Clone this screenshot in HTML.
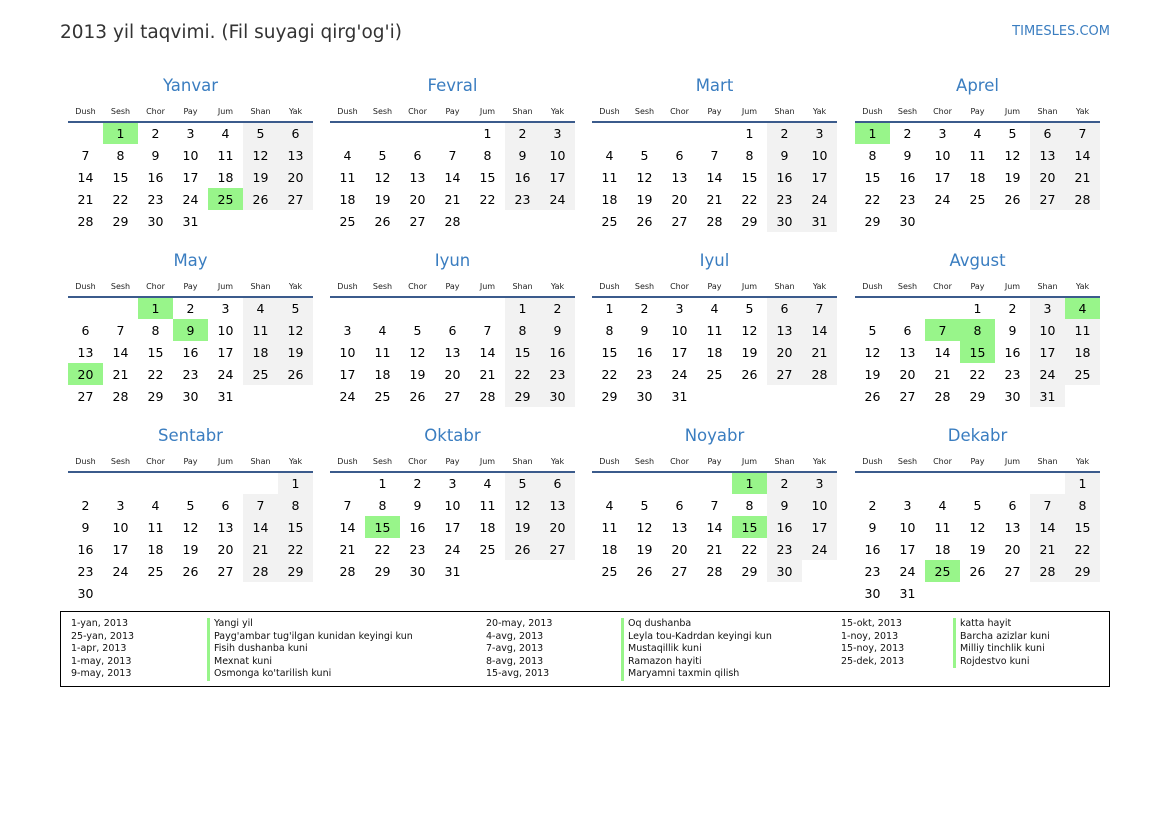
<!DOCTYPE html>
<html><head><meta charset="utf-8"><style>
*{margin:0;padding:0;box-sizing:border-box}
body{width:1169px;height:827px;background:#fff;font-family:"DejaVu Sans","Liberation Sans",sans-serif;color:#000;position:relative;overflow:hidden}
.h1{position:absolute;left:60px;top:21px;font-size:18.5px;color:#333;line-height:24px}
.site{position:absolute;right:59px;top:24px;font-size:13px;color:#3a7dc0;line-height:16px}
.m{position:absolute;width:245px}
.m .t{height:20px;line-height:20px;text-align:center;font-size:16.5px;color:#3a7dc0}
table{border-collapse:collapse;margin-top:6px;width:245px;table-layout:fixed}
th{height:20px;font-size:8px;font-weight:normal;color:#222;border-bottom:2px solid #3b5b8c;vertical-align:middle}
td{width:35px;height:22px;text-align:center;font-size:12.5px;padding:0}
td.w{background:#f2f2f2}
td.g{background:#98f58a}
.leg{position:absolute;left:60px;top:611px;width:1050px;height:76px;border:1px solid #000}
.c{position:absolute;top:6px;font-size:9.5px;line-height:12.5px;color:#111}
.b{border-left:3px solid #98f58a;padding-left:4px}
</style></head><body>
<div class="h1">2013 yil taqvimi. (Fil suyagi qirg'og'i)</div>
<div class="site">TIMESLES.COM</div>

<div class="m" style="left:68px;top:76px"><div class="t">Yanvar</div><table><tr><th>Dush</th><th>Sesh</th><th>Chor</th><th>Pay</th><th>Jum</th><th>Shan</th><th>Yak</th></tr>
<tr><td></td><td class="g">1</td><td>2</td><td>3</td><td>4</td><td class="w">5</td><td class="w">6</td></tr>
<tr><td>7</td><td>8</td><td>9</td><td>10</td><td>11</td><td class="w">12</td><td class="w">13</td></tr>
<tr><td>14</td><td>15</td><td>16</td><td>17</td><td>18</td><td class="w">19</td><td class="w">20</td></tr>
<tr><td>21</td><td>22</td><td>23</td><td>24</td><td class="g">25</td><td class="w">26</td><td class="w">27</td></tr>
<tr><td>28</td><td>29</td><td>30</td><td>31</td><td></td><td></td><td></td></tr></table></div>

<div class="m" style="left:330px;top:76px"><div class="t">Fevral</div><table><tr><th>Dush</th><th>Sesh</th><th>Chor</th><th>Pay</th><th>Jum</th><th>Shan</th><th>Yak</th></tr>
<tr><td></td><td></td><td></td><td></td><td>1</td><td class="w">2</td><td class="w">3</td></tr>
<tr><td>4</td><td>5</td><td>6</td><td>7</td><td>8</td><td class="w">9</td><td class="w">10</td></tr>
<tr><td>11</td><td>12</td><td>13</td><td>14</td><td>15</td><td class="w">16</td><td class="w">17</td></tr>
<tr><td>18</td><td>19</td><td>20</td><td>21</td><td>22</td><td class="w">23</td><td class="w">24</td></tr>
<tr><td>25</td><td>26</td><td>27</td><td>28</td><td></td><td></td><td></td></tr></table></div>

<div class="m" style="left:592px;top:76px"><div class="t">Mart</div><table><tr><th>Dush</th><th>Sesh</th><th>Chor</th><th>Pay</th><th>Jum</th><th>Shan</th><th>Yak</th></tr>
<tr><td></td><td></td><td></td><td></td><td>1</td><td class="w">2</td><td class="w">3</td></tr>
<tr><td>4</td><td>5</td><td>6</td><td>7</td><td>8</td><td class="w">9</td><td class="w">10</td></tr>
<tr><td>11</td><td>12</td><td>13</td><td>14</td><td>15</td><td class="w">16</td><td class="w">17</td></tr>
<tr><td>18</td><td>19</td><td>20</td><td>21</td><td>22</td><td class="w">23</td><td class="w">24</td></tr>
<tr><td>25</td><td>26</td><td>27</td><td>28</td><td>29</td><td class="w">30</td><td class="w">31</td></tr></table></div>

<div class="m" style="left:855px;top:76px"><div class="t">Aprel</div><table><tr><th>Dush</th><th>Sesh</th><th>Chor</th><th>Pay</th><th>Jum</th><th>Shan</th><th>Yak</th></tr>
<tr><td class="g">1</td><td>2</td><td>3</td><td>4</td><td>5</td><td class="w">6</td><td class="w">7</td></tr>
<tr><td>8</td><td>9</td><td>10</td><td>11</td><td>12</td><td class="w">13</td><td class="w">14</td></tr>
<tr><td>15</td><td>16</td><td>17</td><td>18</td><td>19</td><td class="w">20</td><td class="w">21</td></tr>
<tr><td>22</td><td>23</td><td>24</td><td>25</td><td>26</td><td class="w">27</td><td class="w">28</td></tr>
<tr><td>29</td><td>30</td><td></td><td></td><td></td><td></td><td></td></tr></table></div>

<div class="m" style="left:68px;top:251px"><div class="t">May</div><table><tr><th>Dush</th><th>Sesh</th><th>Chor</th><th>Pay</th><th>Jum</th><th>Shan</th><th>Yak</th></tr>
<tr><td></td><td></td><td class="g">1</td><td>2</td><td>3</td><td class="w">4</td><td class="w">5</td></tr>
<tr><td>6</td><td>7</td><td>8</td><td class="g">9</td><td>10</td><td class="w">11</td><td class="w">12</td></tr>
<tr><td>13</td><td>14</td><td>15</td><td>16</td><td>17</td><td class="w">18</td><td class="w">19</td></tr>
<tr><td class="g">20</td><td>21</td><td>22</td><td>23</td><td>24</td><td class="w">25</td><td class="w">26</td></tr>
<tr><td>27</td><td>28</td><td>29</td><td>30</td><td>31</td><td></td><td></td></tr></table></div>

<div class="m" style="left:330px;top:251px"><div class="t">Iyun</div><table><tr><th>Dush</th><th>Sesh</th><th>Chor</th><th>Pay</th><th>Jum</th><th>Shan</th><th>Yak</th></tr>
<tr><td></td><td></td><td></td><td></td><td></td><td class="w">1</td><td class="w">2</td></tr>
<tr><td>3</td><td>4</td><td>5</td><td>6</td><td>7</td><td class="w">8</td><td class="w">9</td></tr>
<tr><td>10</td><td>11</td><td>12</td><td>13</td><td>14</td><td class="w">15</td><td class="w">16</td></tr>
<tr><td>17</td><td>18</td><td>19</td><td>20</td><td>21</td><td class="w">22</td><td class="w">23</td></tr>
<tr><td>24</td><td>25</td><td>26</td><td>27</td><td>28</td><td class="w">29</td><td class="w">30</td></tr></table></div>

<div class="m" style="left:592px;top:251px"><div class="t">Iyul</div><table><tr><th>Dush</th><th>Sesh</th><th>Chor</th><th>Pay</th><th>Jum</th><th>Shan</th><th>Yak</th></tr>
<tr><td>1</td><td>2</td><td>3</td><td>4</td><td>5</td><td class="w">6</td><td class="w">7</td></tr>
<tr><td>8</td><td>9</td><td>10</td><td>11</td><td>12</td><td class="w">13</td><td class="w">14</td></tr>
<tr><td>15</td><td>16</td><td>17</td><td>18</td><td>19</td><td class="w">20</td><td class="w">21</td></tr>
<tr><td>22</td><td>23</td><td>24</td><td>25</td><td>26</td><td class="w">27</td><td class="w">28</td></tr>
<tr><td>29</td><td>30</td><td>31</td><td></td><td></td><td></td><td></td></tr></table></div>

<div class="m" style="left:855px;top:251px"><div class="t">Avgust</div><table><tr><th>Dush</th><th>Sesh</th><th>Chor</th><th>Pay</th><th>Jum</th><th>Shan</th><th>Yak</th></tr>
<tr><td></td><td></td><td></td><td>1</td><td>2</td><td class="w">3</td><td class="g">4</td></tr>
<tr><td>5</td><td>6</td><td class="g">7</td><td class="g">8</td><td>9</td><td class="w">10</td><td class="w">11</td></tr>
<tr><td>12</td><td>13</td><td>14</td><td class="g">15</td><td>16</td><td class="w">17</td><td class="w">18</td></tr>
<tr><td>19</td><td>20</td><td>21</td><td>22</td><td>23</td><td class="w">24</td><td class="w">25</td></tr>
<tr><td>26</td><td>27</td><td>28</td><td>29</td><td>30</td><td class="w">31</td><td></td></tr></table></div>

<div class="m" style="left:68px;top:426px"><div class="t">Sentabr</div><table><tr><th>Dush</th><th>Sesh</th><th>Chor</th><th>Pay</th><th>Jum</th><th>Shan</th><th>Yak</th></tr>
<tr><td></td><td></td><td></td><td></td><td></td><td></td><td class="w">1</td></tr>
<tr><td>2</td><td>3</td><td>4</td><td>5</td><td>6</td><td class="w">7</td><td class="w">8</td></tr>
<tr><td>9</td><td>10</td><td>11</td><td>12</td><td>13</td><td class="w">14</td><td class="w">15</td></tr>
<tr><td>16</td><td>17</td><td>18</td><td>19</td><td>20</td><td class="w">21</td><td class="w">22</td></tr>
<tr><td>23</td><td>24</td><td>25</td><td>26</td><td>27</td><td class="w">28</td><td class="w">29</td></tr>
<tr><td>30</td><td></td><td></td><td></td><td></td><td></td><td></td></tr></table></div>

<div class="m" style="left:330px;top:426px"><div class="t">Oktabr</div><table><tr><th>Dush</th><th>Sesh</th><th>Chor</th><th>Pay</th><th>Jum</th><th>Shan</th><th>Yak</th></tr>
<tr><td></td><td>1</td><td>2</td><td>3</td><td>4</td><td class="w">5</td><td class="w">6</td></tr>
<tr><td>7</td><td>8</td><td>9</td><td>10</td><td>11</td><td class="w">12</td><td class="w">13</td></tr>
<tr><td>14</td><td class="g">15</td><td>16</td><td>17</td><td>18</td><td class="w">19</td><td class="w">20</td></tr>
<tr><td>21</td><td>22</td><td>23</td><td>24</td><td>25</td><td class="w">26</td><td class="w">27</td></tr>
<tr><td>28</td><td>29</td><td>30</td><td>31</td><td></td><td></td><td></td></tr></table></div>

<div class="m" style="left:592px;top:426px"><div class="t">Noyabr</div><table><tr><th>Dush</th><th>Sesh</th><th>Chor</th><th>Pay</th><th>Jum</th><th>Shan</th><th>Yak</th></tr>
<tr><td></td><td></td><td></td><td></td><td class="g">1</td><td class="w">2</td><td class="w">3</td></tr>
<tr><td>4</td><td>5</td><td>6</td><td>7</td><td>8</td><td class="w">9</td><td class="w">10</td></tr>
<tr><td>11</td><td>12</td><td>13</td><td>14</td><td class="g">15</td><td class="w">16</td><td class="w">17</td></tr>
<tr><td>18</td><td>19</td><td>20</td><td>21</td><td>22</td><td class="w">23</td><td class="w">24</td></tr>
<tr><td>25</td><td>26</td><td>27</td><td>28</td><td>29</td><td class="w">30</td><td></td></tr></table></div>

<div class="m" style="left:855px;top:426px"><div class="t">Dekabr</div><table><tr><th>Dush</th><th>Sesh</th><th>Chor</th><th>Pay</th><th>Jum</th><th>Shan</th><th>Yak</th></tr>
<tr><td></td><td></td><td></td><td></td><td></td><td></td><td class="w">1</td></tr>
<tr><td>2</td><td>3</td><td>4</td><td>5</td><td>6</td><td class="w">7</td><td class="w">8</td></tr>
<tr><td>9</td><td>10</td><td>11</td><td>12</td><td>13</td><td class="w">14</td><td class="w">15</td></tr>
<tr><td>16</td><td>17</td><td>18</td><td>19</td><td>20</td><td class="w">21</td><td class="w">22</td></tr>
<tr><td>23</td><td>24</td><td class="g">25</td><td>26</td><td>27</td><td class="w">28</td><td class="w">29</td></tr>
<tr><td>30</td><td>31</td><td></td><td></td><td></td><td></td><td></td></tr></table></div>

<div class="leg">
<div class="c" style="left:10px">1-yan, 2013<br>25-yan, 2013<br>1-apr, 2013<br>1-may, 2013<br>9-may, 2013</div>
<div class="c b" style="left:146px">Yangi yil<br>Payg'ambar tug'ilgan kunidan keyingi kun<br>Fisih dushanba kuni<br>Mexnat kuni<br>Osmonga ko'tarilish kuni</div>
<div class="c" style="left:425px">20-may, 2013<br>4-avg, 2013<br>7-avg, 2013<br>8-avg, 2013<br>15-avg, 2013</div>
<div class="c b" style="left:560px">Oq dushanba<br>Leyla tou-Kadrdan keyingi kun<br>Mustaqillik kuni<br>Ramazon hayiti<br>Maryamni taxmin qilish</div>
<div class="c" style="left:780px">15-okt, 2013<br>1-noy, 2013<br>15-noy, 2013<br>25-dek, 2013</div>
<div class="c b" style="left:892px">katta hayit<br>Barcha azizlar kuni<br>Milliy tinchlik kuni<br>Rojdestvo kuni</div>
</div>
</body></html>
